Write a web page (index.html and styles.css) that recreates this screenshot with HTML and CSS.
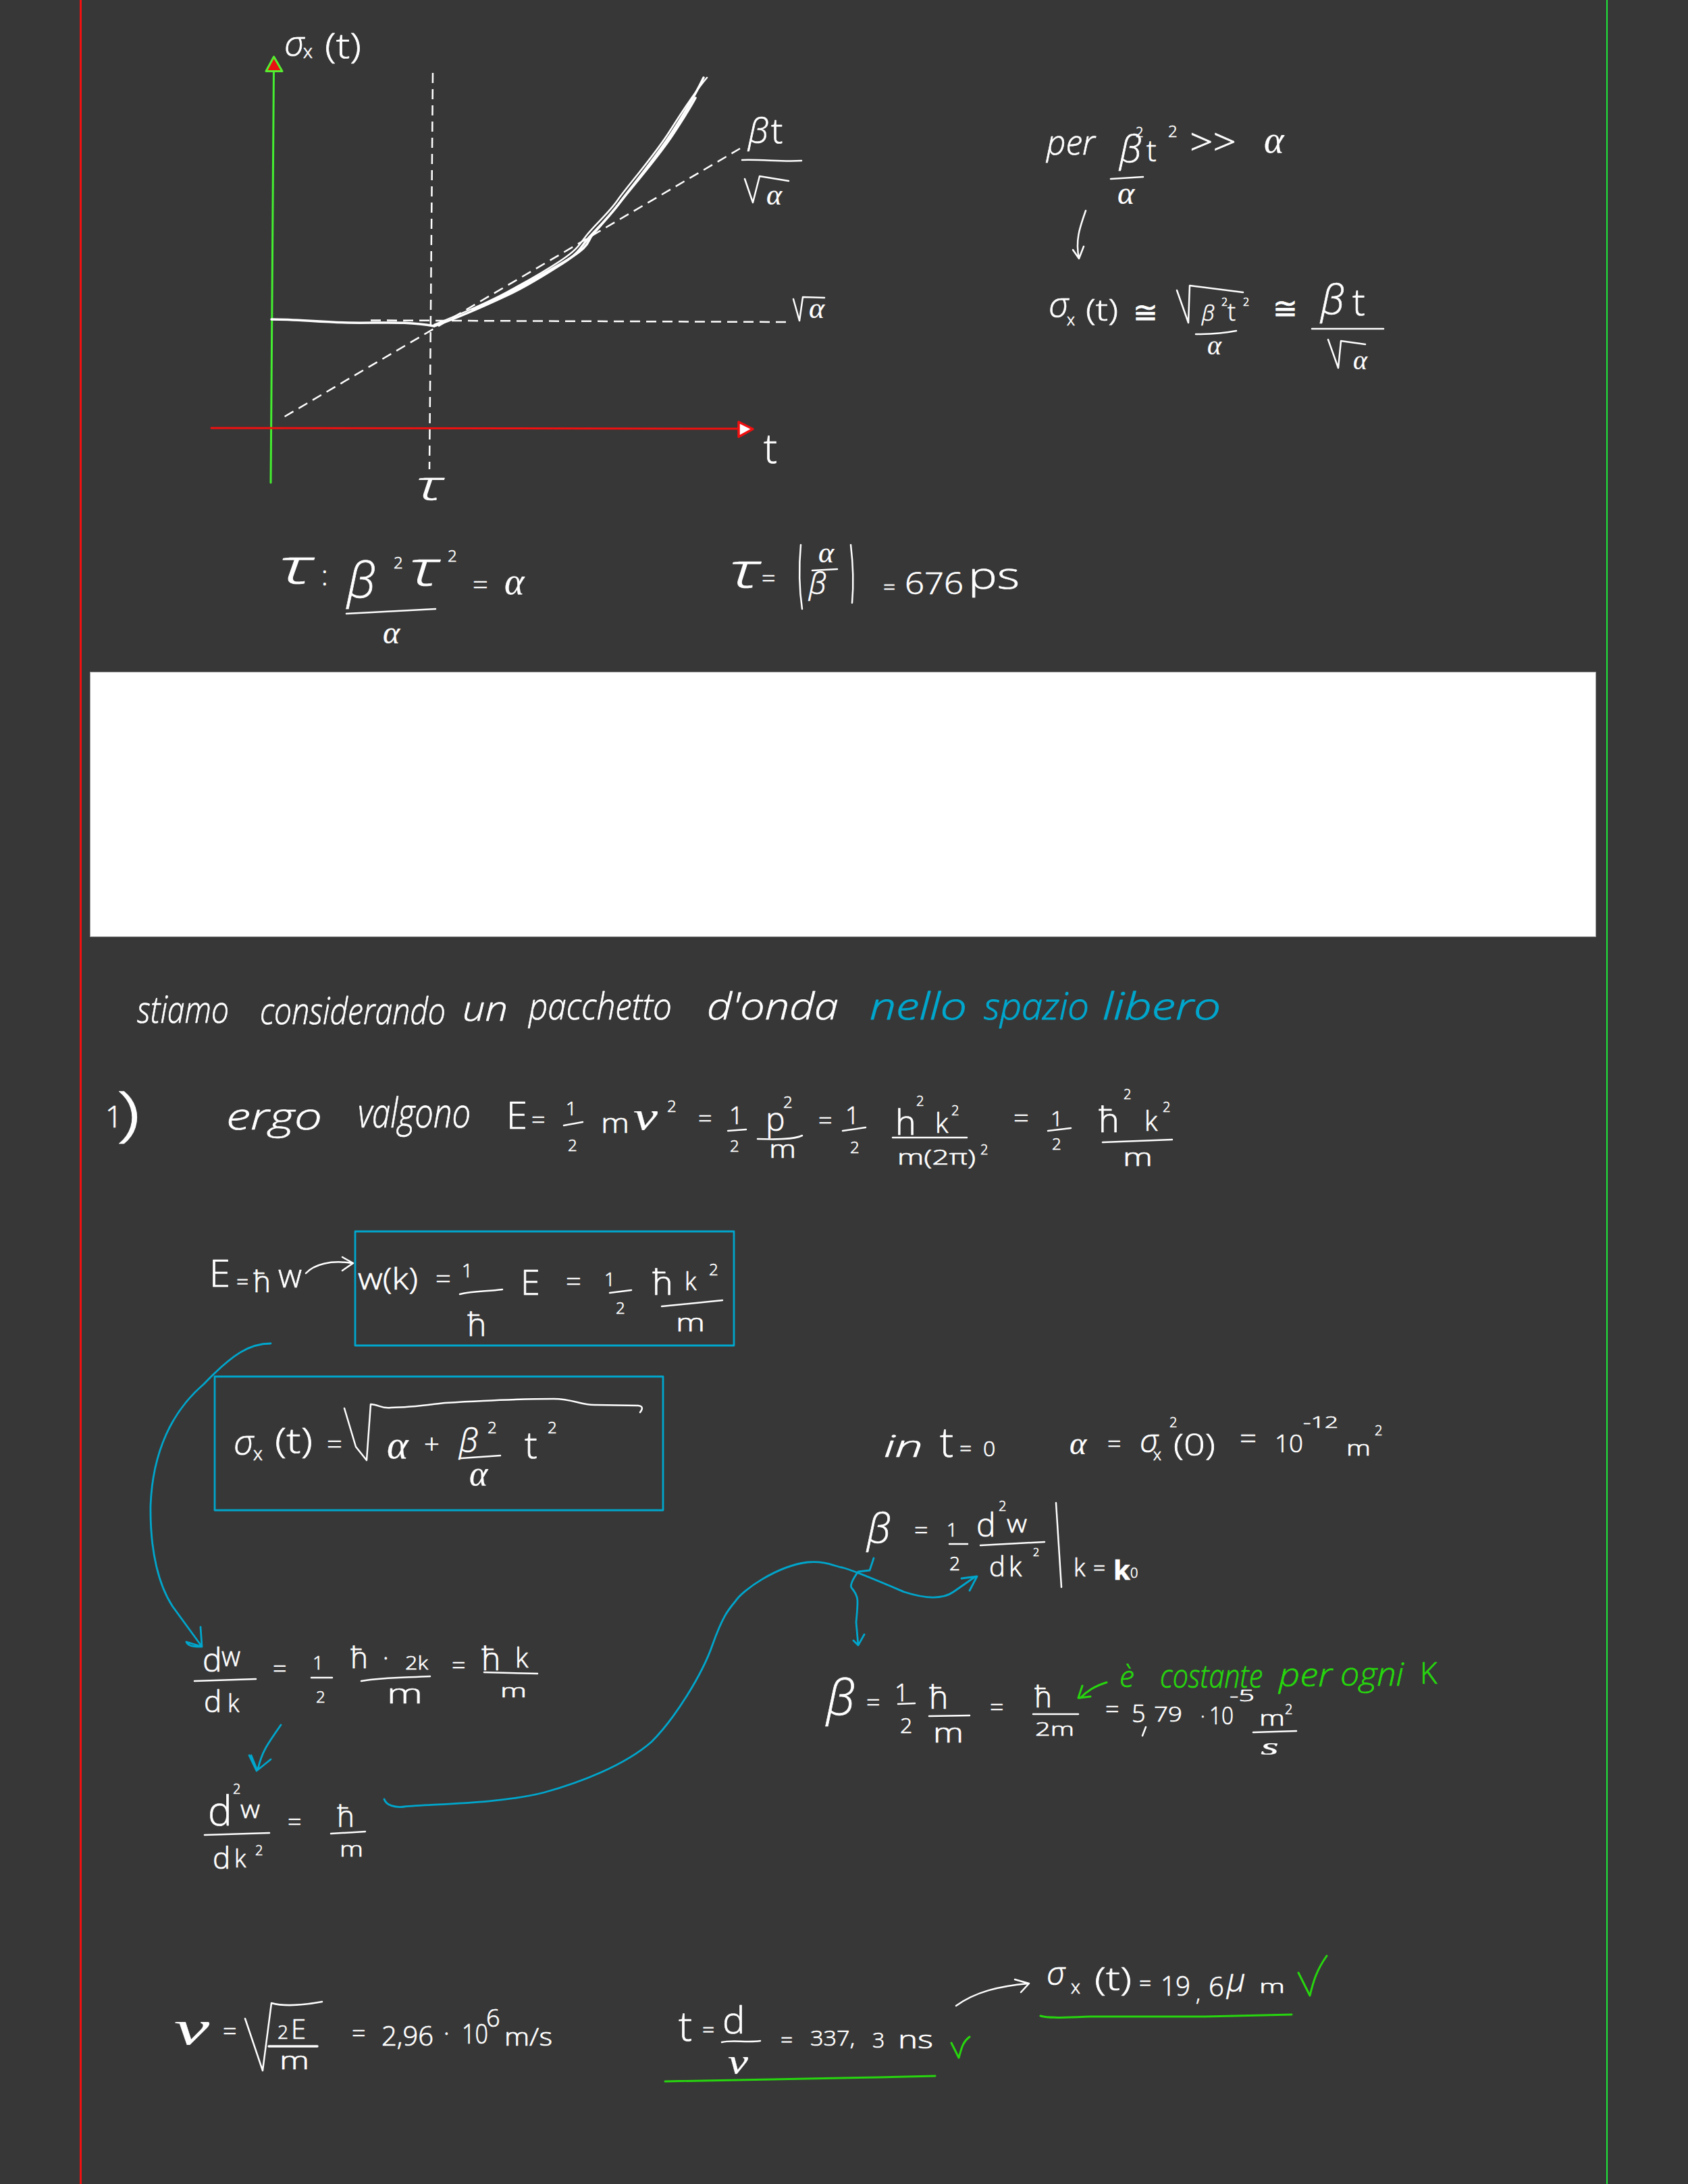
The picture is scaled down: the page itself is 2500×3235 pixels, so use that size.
FILE: index.html
```html
<!DOCTYPE html>
<html lang="it">
<head>
<meta charset="utf-8">
<title>Appunti</title>
<link rel="stylesheet" href="styles.css">
</head>
<body>
<main class="sheet">
  <div class="blank"></div>
</main>
<svg class="ink" width="2500" height="3235" viewBox="0 0 2500 3235" xmlns="http://www.w3.org/2000/svg">
  <!-- graph -->
  <g class="dash">
    <path d="M641 108L636 695"/>
    <path d="M549 474.500L1166 477"/>
    <path d="M421.600 617L1096 220"/>
  </g>
  <path class="axis-g" d="M401 715L405.600 90"/>
  <path class="head-g" d="M405.600 84L394 105.500L418 105.500Z"/>
  <path class="axis-r" d="M313 634L1096 635"/>
  <path class="head-r" d="M1094 625L1115 635.500L1094 647Z"/>
  <g class="wht">
    <path class="thick" d="M402 473C440 473 470 477 516 478S600 475 643 483"/>
    <path class="thick" d="M643 483C680 470 720 452 752 437S810 405 835 389S860 365 873 351S905 318 918 300S970 235 994 198S1030 140 1042 115"/>
    <path d="M643 481C680 466 720 449 750 433S808 401 832 385S858 362 870 347S902 315 915 296S968 232 992 194S1030 135 1047 115"/>
    <path class="thick" d="M700 459C730 447 780 420 830 391S868 358 878 347S912 308 922 295S975 232 996 200S1022 160 1030 145"/>
    <path d="M1099 237C1130 236 1160 240 1187 238"/>
    <path d="M1103 265L1115 300L1125 261L1168 268"/>
    <path d="M1175 443L1184 475L1189 440L1221 441"/>
    <path d="M513 909L645 902"/>
    <path d="M1186 807C1183 840 1184 875 1188 902"/>
    <path d="M1203 845L1240 843"/>
    <path d="M1260 807C1264 840 1264 870 1262 893"/>
    <!-- per beta t -->
    <path d="M1645 265L1693 262"/>
    <path d="M1608 312C1600 335 1592 355 1598 383M1589 370L1598 383L1605 365"/>
    <path d="M1743 430L1760 478L1762 423L1841 433"/>
    <path d="M1771 495C1790 495 1810 494 1831 490"/>
    <path d="M1943 487L2049 487"/>
    <path d="M1967 503L1982 545L1986 505L2022 510"/>
    <!-- line 2 -->
    <path d="M835 1667L863 1662"/>
    <path d="M1078 1675L1105 1673"/>
    <path d="M1122 1687C1150 1688 1175 1688 1188 1682"/>
    <path d="M1248 1675L1282 1670"/>
    <path d="M1322 1685L1432 1685"/>
    <path d="M1552 1675L1586 1671"/>
    <path d="M1633 1692L1736 1688"/>
    <!-- E = hw -->
    <path d="M453 1886C465 1873 490 1866 521 1871M507 1862L523 1871L507 1882"/>
    <path d="M681 1917C700 1912 720 1913 744 1910"/>
    <path d="M903 1915L935 1911"/>
    <path d="M980 1935L1070 1926"/>
    <path d="M510 2086L527 2143L543 2163L549 2080C560 2080 565 2087 579 2085C610 2085 640 2080 659 2078C710 2075 780 2072 820 2072C850 2072 860 2082 883 2081L945 2082Q955 2083 948 2092"/>
    <path d="M683 2160L741 2156"/>
    <!-- beta -->
    <path d="M1406 2287L1433 2287"/>
    <path d="M1452 2289L1547 2284"/>
    <path d="M1564 2226L1572 2351"/>
    <path d="M1330 2524L1355 2523"/>
    <path d="M1376 2542L1436 2541"/>
    <path d="M1530 2539L1597 2539"/>
    <path d="M1692 2571L1697 2558"/>
    <path d="M1856 2566L1920 2564"/>
    <!-- dw/dk -->
    <path d="M288 2490L379 2487"/>
    <path d="M461 2485L492 2485"/>
    <path d="M535 2490C570 2484 600 2485 637 2483"/>
    <path d="M717 2477L796 2479"/>
    <path d="M303 2718L399 2715"/>
    <path d="M490 2716L541 2713"/>
    <!-- velocity -->
    <path d="M363 2990L389 3067L402 2967C420 2972 450 2970 477 2965"/>
    <path class="thick" d="M398 3031L470 3031"/>
    <path d="M1069 3025C1085 3021 1105 3026 1126 3023"/>
    <path d="M1416 2971C1445 2950 1480 2942 1523 2938M1503 2932L1524 2938L1512 2951"/>
  </g>

  <g class="cyan">
    <rect x="526" y="1824" width="561" height="169"/>
    <rect x="318" y="2039" width="664" height="198"/>
    <path d="M401 1990C370 1990 345 2005 302 2050C255 2090 226 2150 223 2230C222 2300 236 2350 256 2380L299 2439M297 2410L299 2439L276 2432Q279 2440 299 2439"/>
    <path d="M569 2665C572 2674 585 2678 599 2676C640 2672 740 2672 806 2655C860 2640 925 2615 965 2580C1000 2545 1040 2480 1055 2437C1070 2395 1078 2385 1089 2372C1100 2355 1150 2320 1196 2314C1225 2312 1235 2320 1248 2322C1262 2325 1320 2350 1339 2358C1370 2368 1395 2370 1412 2358L1445 2335M1424 2338L1447 2335L1436 2356"/>
    <path d="M1294 2308L1288 2326L1271 2328C1262 2340 1258 2350 1262 2353C1272 2365 1271 2370 1268 2403L1271 2437M1264 2430L1271 2437L1280 2421"/>
    <path d="M416 2555C395 2585 388 2595 382 2620M369 2600L380 2623L401 2606M372 2600L380 2620"/>
  </g>

  <g class="lime">
    <path d="M1639 2492C1620 2498 1610 2505 1600 2515M1603 2497L1597 2515L1615 2513"/>
    <path d="M985 3083L1300 3077L1385 3075"/>
    <path d="M1409 3026L1420 3048C1424 3035 1425 3025 1436 3017"/>
    <path d="M1541 2986C1555 2990 1580 2988 1615 2987L1785 2987L1913 2984"/>
    <path d="M1923 2922L1940 2956C1945 2935 1950 2918 1965 2897"/>
  </g>

  <g class="word">
    <!-- graph labels -->
    <text class="s52 cur" x="421" y="83">σ</text>
    <text class="s28" x="449" y="86">x</text>
    <text class="s52" x="481" y="86" textLength="54" lengthAdjust="spacingAndGlyphs">(t)</text>
    <text class="s52 cur" x="1108" y="212">β</text>
    <text class="s52" x="1142" y="212">t</text>
    <text class="s44 gk" x="1135" y="303">α</text>
    <text class="s44 gk" x="1198" y="471">α</text>
    <text class="s60" x="1131" y="686">t</text>
    <text class="s60 cur" x="616" y="740" textLength="40" lengthAdjust="spacingAndGlyphs">τ</text>
    <!-- tau relation -->
    <text class="s72 cur" x="413" y="864" textLength="50" lengthAdjust="spacingAndGlyphs">τ</text>
    <text class="s40" x="476" y="867">:</text>
    <text class="s72 cur" x="514" y="885">β</text>
    <text class="s24" x="583" y="842">2</text>
    <text class="s72 cur" x="606" y="867" textLength="44" lengthAdjust="spacingAndGlyphs">τ</text>
    <text class="s24" x="663" y="832">2</text>
    <text class="s48 gk" x="567" y="953">α</text>
    <text class="s40" x="700" y="880">=</text>
    <text class="s56 gk" x="747" y="880">α</text>
    <text class="s72 cur" x="1080" y="870" textLength="45" lengthAdjust="spacingAndGlyphs">τ</text>
    <text class="s36" x="1128" y="870">=</text>
    <text class="s44 gk" x="1212" y="833">α</text>
    <text class="s44 cur" x="1198" y="880">β</text>
    <text class="s32" x="1308" y="880">=</text>
    <text class="s44" x="1340" y="880" textLength="87" lengthAdjust="spacingAndGlyphs">676</text>
    <text class="s56" x="1434" y="872" textLength="76" lengthAdjust="spacingAndGlyphs">ps</text>
    <!-- per -->
    <text class="s52 cur" x="1550" y="229" textLength="72" lengthAdjust="spacingAndGlyphs">per</text>
    <text class="s56 cur" x="1658" y="240">β</text>
    <text class="s20" x="1682" y="203">2</text>
    <text class="s44" x="1698" y="239">t</text>
    <text class="s24" x="1730" y="203">2</text>
    <text class="s56" x="1762" y="230" textLength="69" lengthAdjust="spacingAndGlyphs">&gt;&gt;</text>
    <text class="s56 gk" x="1872" y="226">α</text>
    <text class="s48 gk" x="1655" y="302">α</text>
    <text class="s52 cur" x="1553" y="470">σ</text>
    <text class="s24" x="1580" y="482">x</text>
    <text class="s44" x="1608" y="475" textLength="48" lengthAdjust="spacingAndGlyphs">(t)</text>
    <text class="s44" x="1678" y="478">≅</text>
    <text class="s32 cur" x="1780" y="475">β</text>
    <text class="s16" x="1809" y="453">2</text>
    <text class="s36" x="1818" y="475">t</text>
    <text class="s16" x="1841" y="453">2</text>
    <text class="s40 gk" x="1788" y="525">α</text>
    <text class="s44" x="1885" y="472">≅</text>
    <text class="s60 cur" x="1956" y="465">β</text>
    <text class="s56" x="2003" y="467">t</text>
    <text class="s40 gk" x="2004" y="547">α</text>
    <!-- heading -->
    <text class="s56 cur" x="203" y="1515" textLength="136" lengthAdjust="spacingAndGlyphs">stiamo</text>
    <text class="s56 cur" x="385" y="1517" textLength="275" lengthAdjust="spacingAndGlyphs">considerando</text>
    <text class="s52 cur" x="685" y="1512" textLength="67" lengthAdjust="spacingAndGlyphs">un</text>
    <text class="s56 cur" x="783" y="1510" textLength="212" lengthAdjust="spacingAndGlyphs">pacchetto</text>
    <text class="s56 cur" x="1047" y="1510" textLength="195" lengthAdjust="spacingAndGlyphs">d'onda</text>
    <!-- energy -->
    <text class="s44" x="156" y="1670">1</text>
    <text class="s88" x="172" y="1680" textLength="36" lengthAdjust="spacingAndGlyphs">)</text>
    <text class="s56 cur" x="335" y="1673" textLength="142" lengthAdjust="spacingAndGlyphs">ergo</text>
    <text class="s60 cur" x="530" y="1670" textLength="167" lengthAdjust="spacingAndGlyphs">valgono</text>
    <text class="s56" x="750" y="1672">E</text>
    <text class="s36" x="787" y="1672">=</text>
    <text class="s28" x="838" y="1652">1</text>
    <text class="s24" x="841" y="1705">2</text>
    <text class="s40" x="890" y="1678" textLength="42" lengthAdjust="spacingAndGlyphs">m</text>
    <text class="s60 gk" x="938" y="1673" textLength="36" lengthAdjust="spacingAndGlyphs">v</text>
    <text class="s24" x="988" y="1647">2</text>
    <text class="s36" x="1034" y="1670">=</text>
    <text class="s36" x="1080" y="1665">1</text>
    <text class="s24" x="1081" y="1706">2</text>
    <text class="s48" x="1134" y="1675">p</text>
    <text class="s24" x="1160" y="1641">2</text>
    <text class="s36" x="1139" y="1715" textLength="40" lengthAdjust="spacingAndGlyphs">m</text>
    <text class="s36" x="1212" y="1673">=</text>
    <text class="s36" x="1252" y="1665">1</text>
    <text class="s24" x="1259" y="1708">2</text>
    <text class="s52" x="1326" y="1681">h</text>
    <text class="s20" x="1357" y="1638">2</text>
    <text class="s40" x="1385" y="1678">k</text>
    <text class="s20" x="1409" y="1652">2</text>
    <text class="s32" x="1329" y="1725" textLength="116" lengthAdjust="spacingAndGlyphs">m(2π)</text>
    <text class="s20" x="1452" y="1710">2</text>
    <text class="s40" x="1501" y="1670">=</text>
    <text class="s32" x="1556" y="1668">1</text>
    <text class="s24" x="1558" y="1703">2</text>
    <text class="s52" x="1627" y="1677">ħ</text>
    <text class="s20" x="1664" y="1628">2</text>
    <text class="s40" x="1695" y="1675">k</text>
    <text class="s20" x="1722" y="1647">2</text>
    <text class="s36" x="1663" y="1727" textLength="44" lengthAdjust="spacingAndGlyphs">m</text>
    <!-- E = hw -->
    <text class="s56" x="310" y="1906">E</text>
    <text class="s32" x="350" y="1909">=</text>
    <text class="s44" x="375" y="1914">ħ</text>
    <text class="s48" x="412" y="1907" textLength="35" lengthAdjust="spacingAndGlyphs">w</text>
    <text class="s44" x="530" y="1910" textLength="89" lengthAdjust="spacingAndGlyphs">w(k)</text>
    <text class="s40" x="645" y="1908">=</text>
    <text class="s28" x="684" y="1892">1</text>
    <text class="s48" x="692" y="1979">ħ</text>
    <text class="s52" x="771" y="1918">E</text>
    <text class="s40" x="838" y="1912">=</text>
    <text class="s28" x="895" y="1905">1</text>
    <text class="s24" x="912" y="1946">2</text>
    <text class="s52" x="966" y="1918">ħ</text>
    <text class="s36" x="1014" y="1911">k</text>
    <text class="s24" x="1050" y="1889">2</text>
    <text class="s36" x="1001" y="1972" textLength="43" lengthAdjust="spacingAndGlyphs">m</text>
    <!-- sigma box -->
    <text class="s52 cur" x="346" y="2155">σ</text>
    <text class="s28" x="375" y="2163">x</text>
    <text class="s52" x="407" y="2152" textLength="56" lengthAdjust="spacingAndGlyphs">(t)</text>
    <text class="s40" x="484" y="2153">=</text>
    <text class="s60 gk" x="573" y="2160">α</text>
    <text class="s40" x="628" y="2153">+</text>
    <text class="s48 cur" x="680" y="2151">β</text>
    <text class="s24" x="722" y="2123">2</text>
    <text class="s52 gk" x="695" y="2200">α</text>
    <text class="s56" x="777" y="2160">t</text>
    <text class="s24" x="811" y="2123">2</text>
    <!-- in t=0 -->
    <text class="s44 cur" x="1309" y="2158" textLength="58" lengthAdjust="spacingAndGlyphs">in</text>
    <text class="s60" x="1392" y="2158">t</text>
    <text class="s32" x="1421" y="2156">=</text>
    <text class="s32" x="1456" y="2157">0</text>
    <text class="s48 gk" x="1584" y="2154">α</text>
    <text class="s36" x="1640" y="2152">=</text>
    <text class="s48 cur" x="1688" y="2151">σ</text>
    <text class="s20" x="1732" y="2114">2</text>
    <text class="s24" x="1708" y="2163">x</text>
    <text class="s44" x="1738" y="2156" textLength="62" lengthAdjust="spacingAndGlyphs">(0)</text>
    <text class="s44" x="1836" y="2146">=</text>
    <text class="s36" x="1888" y="2151" textLength="42" lengthAdjust="spacingAndGlyphs">10</text>
    <text class="s24" x="1930" y="2115" textLength="52" lengthAdjust="spacingAndGlyphs">-12</text>
    <text class="s32" x="1994" y="2156" textLength="36" lengthAdjust="spacingAndGlyphs">m</text>
    <text class="s20" x="2036" y="2126">2</text>
    <!-- beta def -->
    <text class="s60 cur" x="1284" y="2285">β</text>
    <text class="s36" x="1354" y="2280">=</text>
    <text class="s28" x="1402" y="2276">1</text>
    <text class="s28" x="1406" y="2326">2</text>
    <text class="s48" x="1446" y="2276">d</text>
    <text class="s20" x="1479" y="2238">2</text>
    <text class="s36" x="1491" y="2270" textLength="30" lengthAdjust="spacingAndGlyphs">w</text>
    <text class="s40" x="1465" y="2335">d</text>
    <text class="s40" x="1494" y="2335">k</text>
    <text class="s16" x="1530" y="2305">2</text>
    <text class="s36" x="1590" y="2335">k</text>
    <text class="s32" x="1619" y="2333">=</text>
    <text class="s40 bold" x="1649" y="2340">k</text>
    <text class="s20" x="1674" y="2337">0</text>
    <text class="s72 cur" x="1224" y="2540">β</text>
    <text class="s36" x="1283" y="2535">=</text>
    <text class="s36" x="1325" y="2520">1</text>
    <text class="s32" x="1333" y="2567">2</text>
    <text class="s48" x="1376" y="2531">ħ</text>
    <text class="s40" x="1382" y="2581" textLength="45" lengthAdjust="spacingAndGlyphs">m</text>
    <text class="s36" x="1466" y="2542">=</text>
    <text class="s44" x="1532" y="2529">ħ</text>
    <text class="s28" x="1533" y="2571" textLength="58" lengthAdjust="spacingAndGlyphs">2m</text>
    <text class="s36" x="1637" y="2545">=</text>
    <text class="s36" x="1676" y="2551">5</text>
    <text class="s32" x="1709" y="2550" textLength="42" lengthAdjust="spacingAndGlyphs">79</text>
    <text class="s28" x="1778" y="2552">·</text>
    <text class="s36" x="1791" y="2554" textLength="36" lengthAdjust="spacingAndGlyphs">10</text>
    <text class="s24" x="1821" y="2520" textLength="37" lengthAdjust="spacingAndGlyphs">-5</text>
    <text class="s32" x="1865" y="2556" textLength="38" lengthAdjust="spacingAndGlyphs">m</text>
    <text class="s20" x="1903" y="2539">2</text>
    <text class="s36 gk" x="1867" y="2599" textLength="27" lengthAdjust="spacingAndGlyphs">s</text>
    <!-- dw/dk -->
    <text class="s48" x="300" y="2476">d</text>
    <text class="s40" x="328" y="2468" textLength="28" lengthAdjust="spacingAndGlyphs">w</text>
    <text class="s44" x="302" y="2536">d</text>
    <text class="s36" x="337" y="2536">k</text>
    <text class="s36" x="404" y="2485">=</text>
    <text class="s28" x="463" y="2473">1</text>
    <text class="s24" x="468" y="2522">2</text>
    <text class="s44" x="519" y="2471">ħ</text>
    <text class="s36" x="567" y="2468">·</text>
    <text class="s28" x="600" y="2473" textLength="34" lengthAdjust="spacingAndGlyphs">2k</text>
    <text class="s40" x="573" y="2523" textLength="53" lengthAdjust="spacingAndGlyphs">m</text>
    <text class="s36" x="669" y="2480">=</text>
    <text class="s48" x="713" y="2474">ħ</text>
    <text class="s40" x="763" y="2470">k</text>
    <text class="s28" x="741" y="2514" textLength="39" lengthAdjust="spacingAndGlyphs">m</text>
    <text class="s60" x="308" y="2704">d</text>
    <text class="s20" x="345" y="2657">2</text>
    <text class="s36" x="356" y="2693" textLength="29" lengthAdjust="spacingAndGlyphs">w</text>
    <text class="s44" x="315" y="2768">d</text>
    <text class="s36" x="347" y="2766">k</text>
    <text class="s20" x="378" y="2748">2</text>
    <text class="s36" x="426" y="2712">=</text>
    <text class="s44" x="499" y="2706">ħ</text>
    <text class="s32" x="503" y="2750" textLength="35" lengthAdjust="spacingAndGlyphs">m</text>
    <!-- velocity -->
    <text class="s72 gk" x="258" y="3028" textLength="52" lengthAdjust="spacingAndGlyphs">v</text>
    <text class="s36" x="330" y="3022">=</text>
    <text class="s28" x="411" y="3020">2</text>
    <text class="s40" x="431" y="3020">E</text>
    <text class="s36" x="414" y="3065" textLength="44" lengthAdjust="spacingAndGlyphs">m</text>
    <text class="s36" x="521" y="3025">=</text>
    <text class="s40" x="565" y="3030" textLength="77" lengthAdjust="spacingAndGlyphs">2,96</text>
    <text class="s36" x="657" y="3024">·</text>
    <text class="s40" x="684" y="3027" textLength="39" lengthAdjust="spacingAndGlyphs">10</text>
    <text class="s36" x="720" y="3002">6</text>
    <text class="s36" x="747" y="3030" textLength="71" lengthAdjust="spacingAndGlyphs">m/s</text>
    <text class="s60" x="1005" y="3023">t</text>
    <text class="s32" x="1040" y="3017">=</text>
    <text class="s56" x="1070" y="3012">d</text>
    <text class="s52 gk" x="1078" y="3071" textLength="30" lengthAdjust="spacingAndGlyphs">v</text>
    <text class="s32" x="1156" y="3032">=</text>
    <text class="s32" x="1200" y="3030" textLength="66" lengthAdjust="spacingAndGlyphs">337,</text>
    <text class="s32" x="1292" y="3033">3</text>
    <text class="s36" x="1330" y="3034" textLength="52" lengthAdjust="spacingAndGlyphs">ns</text>
    <text class="s48 cur" x="1550" y="2940">σ</text>
    <text class="s28" x="1586" y="2953">x</text>
    <text class="s48" x="1621" y="2948" textLength="55" lengthAdjust="spacingAndGlyphs">(t)</text>
    <text class="s32" x="1687" y="2948">=</text>
    <text class="s40" x="1719" y="2956" textLength="44" lengthAdjust="spacingAndGlyphs">19</text>
    <text class="s32" x="1771" y="2964">,</text>
    <text class="s40" x="1790" y="2957">6</text>
    <text class="s48 cur" x="1817" y="2950">μ</text>
    <text class="s28" x="1865" y="2952" textLength="38" lengthAdjust="spacingAndGlyphs">m</text>
  </g>

  <g class="word word-cyan">
    <text class="s56 cur" x="1288" y="1510" textLength="144" lengthAdjust="spacingAndGlyphs">nello</text>
    <text class="s56 cur" x="1457" y="1510" textLength="156" lengthAdjust="spacingAndGlyphs">spazio</text>
    <text class="s56 cur" x="1633" y="1510" textLength="175" lengthAdjust="spacingAndGlyphs">libero</text>
  </g>
  <g class="word word-lime">
    <text class="s44 cur" x="1658" y="2499">è</text>
    <text class="s48 cur" x="1718" y="2500" textLength="152" lengthAdjust="spacingAndGlyphs">costante</text>
    <text class="s48 cur" x="1894" y="2498" textLength="79" lengthAdjust="spacingAndGlyphs">per</text>
    <text class="s48 cur" x="1985" y="2497" textLength="94" lengthAdjust="spacingAndGlyphs">ogni</text>
    <text class="s44" x="2103" y="2494">K</text>
  </g>
</svg>
</body>
</html>
```
FILE: styles.css
```css
html, body {
  margin: 0;
  padding: 0;
  background: #373737;
}
body {
  position: relative;
  width: 2500px;
  height: 3235px;
  overflow: hidden;
}
.sheet {
  box-sizing: border-box;
  width: 2263px;
  height: 3235px;
  margin-left: 118px;
  padding: 995px 15px 0 12px;
  border-left: 3px solid #f01010;
  border-right: 2px solid #1fe83a;
}
.blank {
  box-sizing: border-box;
  height: 393px;
  background: #fff;
  border: 1px solid #9a9a9a;
}
.ink {
  position: absolute;
  left: 0;
  top: 0;
  display: block;
  fill: none;
  stroke-linecap: round;
  stroke-linejoin: round;
}
.dash path {
  stroke: #fff;
  stroke-width: 2.500;
  stroke-dasharray: 15 9;
  stroke-linecap: butt;
}
.axis-g {
  stroke: #44ee30;
  stroke-width: 3;
}
.head-g {
  fill: #e81010;
  stroke: #55ee30;
  stroke-width: 3;
}
.axis-r {
  stroke: #f01010;
  stroke-width: 3;
}
.head-r {
  fill: #fff;
  stroke: #f01010;
  stroke-width: 3.500;
}
.wht path {
  stroke: #fff;
  stroke-width: 2.500;
}
.wht .thick {
  stroke-width: 3.500;
}
.cyan rect,
.cyan path {
  stroke: #00a6cc;
  stroke-width: 2.800;
}
.lime path {
  stroke: #27d60e;
  stroke-width: 3;
}
.word text {
  fill: #fff;
  stroke: #fff;
  stroke-width: 0.700;
  font-family: "Open Sans", "DejaVu Sans", sans-serif;
  font-weight: 300;
}
.word .cur {
  font-style: italic;
}
.word .gk {
  font-family: "Liberation Serif", "DejaVu Serif", serif;
  font-style: italic;
  font-weight: 400;
  stroke-width: 0.200;
}
.word .bold {
  font-weight: 700;
}
.word-cyan text {
  fill: #00a6cc;
  stroke: #00a6cc;
  stroke-width: 1;
}
.word-lime text {
  fill: #27d60e;
  stroke: #27d60e;
}
.s16 { font-size: 16px; }
.s20 { font-size: 20px; }
.s24 { font-size: 24px; }
.s28 { font-size: 28px; }
.s32 { font-size: 32px; }
.s36 { font-size: 36px; }
.s40 { font-size: 40px; }
.s44 { font-size: 44px; }
.s48 { font-size: 48px; }
.s52 { font-size: 52px; }
.s56 { font-size: 56px; }
.s60 { font-size: 60px; }
.s72 { font-size: 72px; }
.s88 { font-size: 88px; }
```
